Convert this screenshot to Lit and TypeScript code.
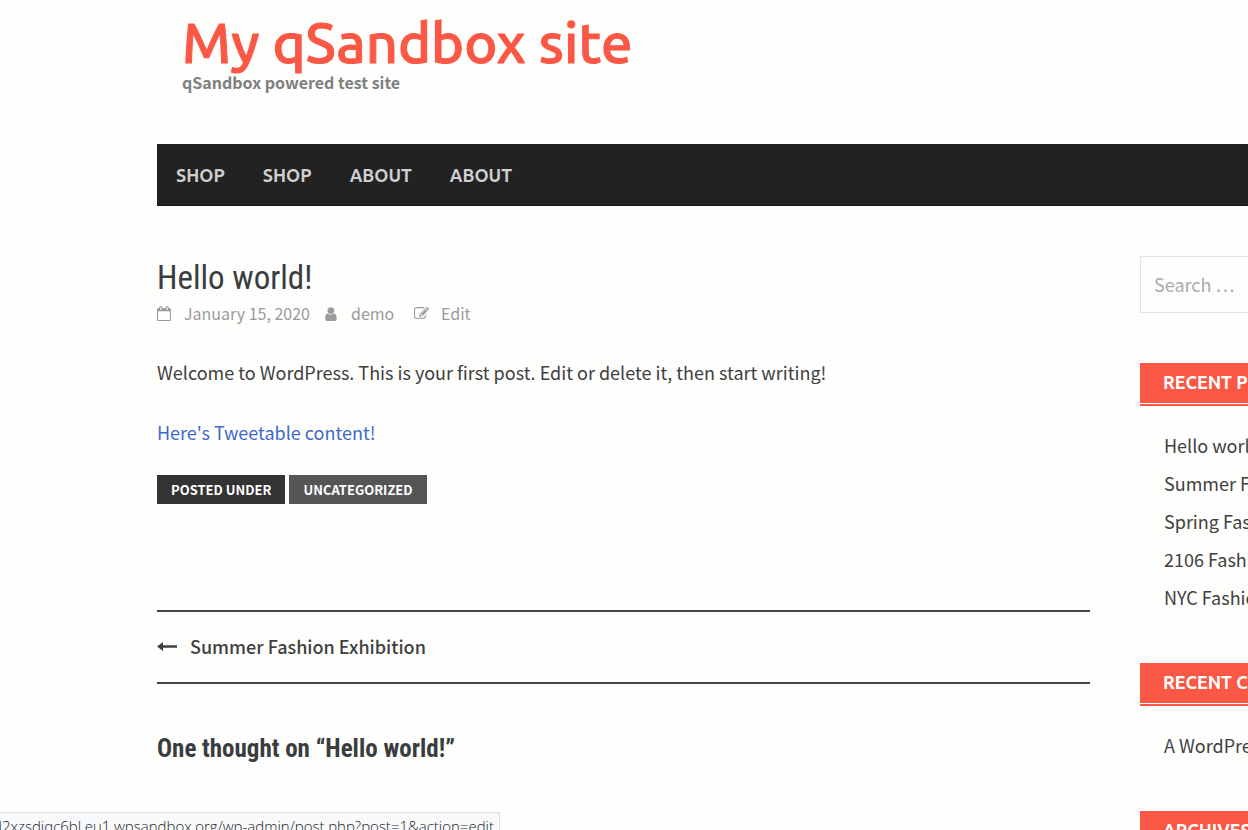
import { LitElement, html, css, svg } from "lit";
import { customElement } from "lit/decorators.js";

const icon = (cls: string, box: string, d: string) => html`
  <svg class=${cls} viewBox=${box} aria-hidden="true">${svg`<path d=${d} />`}</svg>
`;

const CALENDAR =
  "M192 1664h1408v-1024h-1408v1024zm384-1216v-288q0-14-9-23t-23-9h-64q-14 0-23 9t-9 23v288q0 14 9 23t23 9h64q14 0 23-9t9-23zm768 0v-288q0-14-9-23t-23-9h-64q-14 0-23 9t-9 23v288q0 14 9 23t23 9h64q14 0 23-9t9-23zm384-64v1280q0 52-38 90t-90 38h-1408q-52 0-90-38t-38-90v-1280q0-52 38-90t90-38h128v-96q0-66 47-113t113-47h64q66 0 113 47t47 113v96h384v-96q0-66 47-113t113-47h64q66 0 113 47t47 113v96h128q52 0 90 38t38 90z";
const USER =
  "M1536 1399q0 109-62.5 187t-150.5 78h-854q-88 0-150.5-78t-62.5-187q0-85 8.5-160.5t31.5-152 58.5-131 94-89 134.5-34.5q131 128 313 128t313-128q76 0 134.5 34.5t94 89 58.5 131 31.5 152 8.5 160.5zm-256-887q0 159-112.5 271.5t-271.5 112.5-271.5-112.5-112.5-271.5 112.5-271.5 271.5-112.5 271.5 112.5 112.5 271.5z";
const PENCIL =
  "M888 1184l116-116-152-152-116 116v56h96v96h56zm440-720q-16-16-33 1l-350 350q-17 17-1 33t33-1l350-350q17-17 1-33zm80 594v190q0 119-84.5 203.5t-203.5 84.5h-832q-119 0-203.5-84.5t-84.5-203.5v-832q0-119 84.5-203.5t203.5-84.5h832q63 0 117 25 15 7 18 23 3 17-9 29l-49 49q-14 14-32 8-23-6-45-6h-832q-66 0-113 47t-47 113v832q0 66 47 113t113 47h832q66 0 113-47t47-113v-126q0-13 9-22l64-64q15-15 35-7t20 29zm-96-738l288 288-672 672h-288v-288zm444 132l-92 92-288-288 92-92q28-28 68-28t68 28l152 152q28 28 28 68t-28 68z";
const ARROW = "M0 5.5L6 1V4.2H20V6.8H6V10Z";

@customElement("app-root")
export class AppRoot extends LitElement {
  static styles = css`
    :host {
      display: block;
      box-sizing: border-box;
      height: 100vh;
      overflow: hidden;
      padding-left: 157px;
      background: #fefefd;
      color: #404040;
      font-family: "Noto Sans CJK SC", "Open Sans", sans-serif;
      font-size: 18px;
      line-height: 30px;
    }
    * { box-sizing: border-box; }
    a { color: inherit; text-decoration: none; }
    h1, h2, h3, p, ul { margin: 0; padding: 0; font-weight: inherit; }
    ul { list-style: none; }
    svg { display: block; fill: currentColor; flex: none; }

    .brand { height: 144px; padding: 12px 25px 0; }
    .site-title {
      color: #fb5745;
      font: 500 56px/62px Ubuntu, "Noto Sans", sans-serif;
      -webkit-text-stroke: 1px #fb5745;
      white-space: nowrap;
    }
    .tagline { color: #7d7f80; font-size: 16px; font-weight: 700; line-height: 16px; }

    .menu { background: #222223; border-bottom: 1px solid #161617; }
    .menu ul { display: flex; padding: 2px 0 0 19px; gap: 38px; }
    .menu a {
      display: block;
      color: #cfcfcf;
      font: 700 18px/59px Ubuntu, "Noto Sans CJK SC", sans-serif;
      text-transform: uppercase;
    }

    .layout {
      display: grid;
      grid-template-columns: minmax(0, 1fr) 108px;
      gap: 50px;
      padding-top: 50px;
    }
    .entry-title {
      color: #3a3d40;
      font: 400 33px/44px "Roboto Condensed", "Liberation Sans Narrow", Roboto, sans-serif;
    }
    .meta { display: flex; color: #999b9d; font-size: 16px; line-height: 26px; margin-bottom: 31px; }
    .meta > * { display: flex; align-items: center; gap: 12px; }
    .meta .date { width: 167px; }
    .meta .author { width: 90px; }
    .glyph { width: 15px; height: 15px; }
    .tweet { display: block; margin-top: 30px; color: #4169c8; }

    .tags { display: flex; gap: 4px; margin-top: 28px; }
    .tag {
      padding: 0 14px;
      background: #555556;
      color: #fff;
      font-size: 13px;
      font-weight: 700;
      line-height: 29px;
      text-transform: uppercase;
    }
    .tag.label { background: #333334; }

    .post-nav {
      margin-top: 106px;
      border-top: 2px solid #444446;
      border-bottom: 2px solid #444446;
      padding: 19px 0 21px;
    }
    .post-nav a { display: flex; align-items: center; gap: 13px; font-weight: 500; }
    .arrow { width: 20px; height: 10px; }
    .comments-title {
      margin-top: 49px;
      color: #3a3d40;
      font: 700 25px/32px "Roboto Condensed", "Liberation Sans Narrow", Roboto, sans-serif;
    }

    .sidebar { overflow: hidden; white-space: nowrap; }
    .search {
      display: block;
      width: 310px;
      height: 57px;
      margin-bottom: 50px;
      padding: 0 13px 2px;
      border: 1px solid #e3e3e3;
      border-radius: 0;
      background: transparent;
      color: inherit;
      font: inherit;
    }
    .search::placeholder { color: #a9abad; opacity: 1; }
    .widget { margin-bottom: 47px; }
    .widget-title { border-bottom: 2px solid #fb5745; padding-bottom: 1px; }
    .widget-title span {
      display: block;
      padding: 0 0 2px 23px;
      background: #fb5745;
      color: #fff;
      font: 700 18px/38px Ubuntu, "Noto Sans CJK SC", sans-serif;
      text-transform: uppercase;
    }
    .widget ul { padding: 20px 0 0 24px; line-height: 38px; }

    .status {
      position: fixed;
      left: 0;
      bottom: 0;
      display: flex;
      justify-content: flex-end;
      width: 500px;
      height: 18px;
      overflow: hidden;
      padding-right: 5px;
      border: 1px solid #dfe0e2;
      border-width: 1px 1px 0 0;
      background: #f8f9fb;
      color: #222527;
      font: 300 15px/26px "Open Sans", sans-serif;
      white-space: nowrap;
    }
  `;

  private menu = ["Shop", "Shop", "About", "About"];
  private posts = [
    "Hello world!",
    "Summer Fashion Exhibition",
    "Spring Fashion Week",
    "2106 Fashion Show",
    "NYC Fashion Week",
  ];

  private widget(title: string, items: string[]) {
    return html`
      <section class="widget">
        <h3 class="widget-title"><span>${title}</span></h3>
        <ul>${items.map((i) => html`<li><a href="#">${i}</a></li>`)}</ul>
      </section>
    `;
  }

  render() {
    return html`
      <header>
        <div class="brand">
          <h1 class="site-title"><a href="#">My qSandbox site</a></h1>
          <p class="tagline">qSandbox powered test site</p>
        </div>
        <nav class="menu">
          <ul>${this.menu.map((m) => html`<li><a href="#">${m}</a></li>`)}</ul>
        </nav>
      </header>
      <div class="layout">
        <main>
          <article>
            <h2 class="entry-title">Hello world!</h2>
            <div class="meta">
              <a class="date" href="#">${icon("glyph", "64 0 1792 1792", CALENDAR)}January 15, 2020</a>
              <a class="author" href="#">${icon("glyph", "128 0 1664 1664", USER)}demo</a>
              <a href="#">${icon("glyph", "0 0 1792 1792", PENCIL)}Edit</a>
            </div>
            <p>Welcome to WordPress. This is your first post. Edit or delete it, then start writing!</p>
            <a class="tweet" href="#">Here's Tweetable content!</a>
            <div class="tags">
              <span class="tag label">Posted under</span>
              <a class="tag" href="#">Uncategorized</a>
            </div>
          </article>
          <nav class="post-nav">
            <a href="#">${icon("arrow", "0 0 20 10", ARROW)}Summer Fashion Exhibition</a>
          </nav>
          <h2 class="comments-title">One thought on “Hello world!”</h2>
        </main>
        <aside class="sidebar">
          <input class="search" type="search" placeholder="Search …" aria-label="Search" />
          ${this.widget("Recent Posts", this.posts)}
          ${this.widget("Recent Comments", ["A WordPress Commenter"])}
          ${this.widget("Archives", [])}
        </aside>
      </div>
      <div class="status">d2xzsdjqc6bl.eu1.wpsandbox.org/wp-admin/post.php?post=1&amp;action=edit</div>
    `;
  }
}
